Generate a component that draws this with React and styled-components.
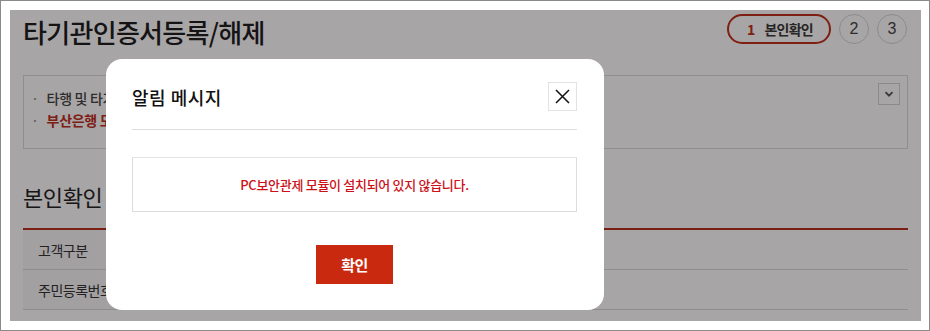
import React from "react";
import styled, { createGlobalStyle } from "styled-components";

const GlobalStyle = createGlobalStyle`
  html, body {
    margin: 0;
    padding: 0;
    background: #ffffff;
  }
  body {
    font-family: "Noto Sans CJK KR", "Noto Sans", sans-serif;
    color: #222;
  }
  * {
    box-sizing: border-box;
  }
`;

const Frame = styled.div`
  width: 930px;
  height: 331px;
  border: 1px solid #8a8a8a;
  padding: 9px;
  background: #fff;
`;

const Screen = styled.div`
  position: relative;
  width: 911px;
  height: 311px;
  overflow: hidden;
  background: #fff;
`;

const Page = styled.div`
  padding: 4px 13px 0 13px;
  display: flex;
  flex-direction: column;
`;

const HeaderRow = styled.div`
  display: flex;
  align-items: flex-start;
  justify-content: space-between;
`;

const PageTitle = styled.h1`
  margin: 0;
  font-size: 26px;
  line-height: 36px;
  font-weight: 500;
  letter-spacing: -0.7px;
  color: #1c1c1c;
`;

const Steps = styled.div`
  display: flex;
  gap: 8px;
  padding-right: 1px;
`;

const ActiveStep = styled.div`
  height: 30px;
  width: 104px;
  border: 2px solid #c0301c;
  border-radius: 15px;
  display: flex;
  align-items: center;
  padding-left: 18px;
  gap: 10px;
  font-size: 14px;
  font-weight: 700;
  letter-spacing: -0.8px;
  color: #3a3a3a;
  span {
    color: #c0301c;
  }
`;

const StepCircle = styled.div`
  width: 30px;
  height: 30px;
  border: 1px solid #d6d6d6;
  border-radius: 50%;
  display: flex;
  align-items: center;
  justify-content: center;
  font-size: 16px;
  color: #444;
  font-family: "Liberation Sans", Arial, sans-serif;
`;

const InfoBox = styled.div`
  margin-top: 25px;
  height: 74px;
  border: 1px solid #dcdcdc;
  display: flex;
  justify-content: space-between;
  padding: 7px 7px 0 7px;
`;

const InfoList = styled.ul`
  list-style: none;
  margin: 4px 0 0 0;
  padding: 0;
`;

const InfoItem = styled.li`
  font-size: 14px;
  line-height: 22px;
  letter-spacing: -0.3px;
  color: ${(p) => (p.$accent ? "#c0301c" : "#444")};
  font-weight: ${(p) => (p.$accent ? 700 : 500)};
  &::before {
    content: "·";
    color: #888;
    font-weight: 400;
    margin-right: 8px;
  }
`;

const ToggleButton = styled.button`
  width: 22px;
  height: 22px;
  border: 1px solid #d4d4d4;
  background: #fff;
  padding: 0;
  display: flex;
  align-items: center;
  justify-content: center;
`;

const SectionTitle = styled.h2`
  margin: 29px 0 0 0;
  font-size: 22px;
  line-height: 36px;
  font-weight: 400;
  letter-spacing: -0.4px;
  color: #222;
`;

const Table = styled.div`
  margin-top: 14px;
  border-top: 2px solid #b8301c;
`;

const Row = styled.div`
  display: flex;
  height: 40px;
  border-bottom: 1px solid #d8d8d8;
`;

const RowLabel = styled.div`
  width: 160px;
  padding-left: 15px;
  display: flex;
  align-items: center;
  font-size: 14px;
  letter-spacing: -0.5px;
  color: #333;
  background: #f7f7f7;
`;

const Overlay = styled.div`
  position: absolute;
  inset: 0;
  background: rgba(8, 4, 6, 0.355);
  padding: 49px 0 0 96px;
`;

const Modal = styled.div`
  width: 498px;
  height: 251px;
  background: #fff;
  border-radius: 16px;
  padding: 0 27px 26px 26px;
  display: flex;
  flex-direction: column;
`;

const ModalHeader = styled.div`
  display: flex;
  align-items: center;
  justify-content: space-between;
  padding: 23px 0 18px;
  border-bottom: 1px solid #dddddd;
`;

const ModalTitle = styled.h3`
  margin: 0;
  font-size: 18px;
  line-height: 24px;
  font-weight: 500;
  letter-spacing: 0.5px;
  color: #111;
`;

const CloseButton = styled.button`
  width: 29px;
  height: 29px;
  border: 1px solid #e2e2e2;
  background: #fff;
  padding: 0;
  display: flex;
  align-items: center;
  justify-content: center;
`;

const MessageBox = styled.div`
  margin-top: 27px;
  height: 55px;
  border: 1px solid #dcdcdc;
  border-top-color: #e4e4e4;
  display: flex;
  align-items: center;
  justify-content: center;
  font-size: 13px;
  font-weight: 500;
  letter-spacing: -0.3px;
  color: #cc1119;
`;

const ConfirmButton = styled.button`
  align-self: center;
  margin-top: 33px;
  width: 77px;
  height: 39px;
  border: none;
  background: #c9290f;
  color: #fff;
  font-family: "Noto Sans CJK KR", "Noto Sans", sans-serif;
  font-size: 15px;
  font-weight: 700;
  letter-spacing: -0.5px;
`;

const App = () => {
  return (
    <>
      <GlobalStyle />
      <Frame>
        <Screen>
          <Page>
            <HeaderRow>
              <PageTitle>타기관인증서등록/해제</PageTitle>
              <Steps>
                <ActiveStep>
                  <span>1</span>본인확인
                </ActiveStep>
                <StepCircle>2</StepCircle>
                <StepCircle>3</StepCircle>
              </Steps>
            </HeaderRow>
            <InfoBox>
              <InfoList>
                <InfoItem>타행 및 타기관에서 발급받은 인증서를 등록하실 수 있습니다.</InfoItem>
                <InfoItem $accent>부산은행 모바일뱅킹 인증서 등록</InfoItem>
              </InfoList>
              <ToggleButton>
                <svg width="12" height="12" viewBox="0 0 12 12">
                  <path d="M2.5 4.2 L6 7.7 L9.5 4.2" fill="none" stroke="#555" strokeWidth="1.8" />
                </svg>
              </ToggleButton>
            </InfoBox>
            <SectionTitle>본인확인</SectionTitle>
            <Table>
              <Row>
                <RowLabel>고객구분</RowLabel>
              </Row>
              <Row>
                <RowLabel>주민등록번호</RowLabel>
              </Row>
            </Table>
          </Page>
          <Overlay>
            <Modal>
              <ModalHeader>
                <ModalTitle>알림 메시지</ModalTitle>
                <CloseButton>
                  <svg width="15" height="15" viewBox="0 0 15 15">
                    <path d="M1 1 L14 14 M14 1 L1 14" stroke="#111" strokeWidth="1.5" />
                  </svg>
                </CloseButton>
              </ModalHeader>
              <MessageBox>PC보안관제 모듈이 설치되어 있지 않습니다.</MessageBox>
              <ConfirmButton>확인</ConfirmButton>
            </Modal>
          </Overlay>
        </Screen>
      </Frame>
    </>
  );
};

export default App;
